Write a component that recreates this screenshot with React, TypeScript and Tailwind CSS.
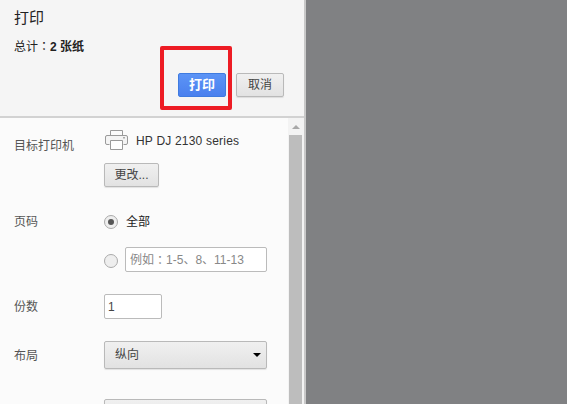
const font = "font-['Liberation_Sans','Noto_Sans_CJK_SC',sans-serif]"
const colon = "font-['Noto_Sans_CJK_TC',sans-serif]"

function PrinterIcon() {
  return (
    <svg width="23" height="20" viewBox="0 0 23 20" fill="none" stroke="#9a9a9a" strokeWidth="1" className="mb-[3px] ml-[1px]">
      <path d="M5.5 5.5V0.5H17.5V5.5" />
      <path d="M4.5 14.5H2A1.5 1.5 0 0 1 0.5 13V7A1.5 1.5 0 0 1 2 5.5H21A1.5 1.5 0 0 1 22.5 7V13A1.5 1.5 0 0 1 21 14.5H18.5" fill="#f4f4f4" />
      <path d="M5.5 10.5H17.5V19.5H5.5Z" fill="#fff" />
      <rect x="18" y="7" width="2" height="1.5" fill="#aaa" stroke="none" />
    </svg>
  )
}

function Row({
  label,
  className,
  labelClass,
  children,
}: {
  label: string
  className: string
  labelClass?: string
  children?: React.ReactNode
}) {
  return (
    <div className={`flex ${className}`}>
      <div className={`w-[90px] shrink-0 text-[12px] leading-[18px] text-[#555] ${labelClass ?? ""}`}>{label}</div>
      <div className="flex-1">{children}</div>
    </div>
  )
}

const buttonCls =
  "rounded-[2px] border border-[#b9b9b9] bg-gradient-to-b from-[#f0f0f0] to-[#e2e2e2] text-[12px] text-[#444] shadow-[0_1px_1px_rgba(0,0,0,0.1)]"

export default function App() {
  return (
    <div className={`relative flex h-[404px] w-[567px] overflow-hidden bg-[#808183] ${font}`}>
      <div className="flex h-full w-[304px] shrink-0 flex-col overflow-hidden bg-[#fbfbfb]">
        <div className="h-[118px] shrink-0 border-b-2 border-[#d2d2d2] bg-[#f5f5f5] pl-[14px] pr-[20px] pt-[9px]">
          <h1 className="text-[15px] leading-[18px] font-normal text-[#222]">打印</h1>
          <p className="mt-[10px] text-[12px] leading-[18px] text-[#222]">
            总计<span className={colon}>：</span>
            <b>2 张纸</b>
          </p>
          <div className="mt-[17px] flex justify-end gap-[10px]">
            <button className="h-[24px] w-[48px] rounded-[2px] border border-[#3f7be0] bg-gradient-to-b from-[#5c94f6] to-[#4a80ee] text-[13px] font-bold text-white">
              打印
            </button>
            <button className={`h-[24px] w-[48px] ${buttonCls}`}>取消</button>
          </div>
        </div>

        <div className="flex min-h-0 flex-1">
          <div className="flex-1 overflow-hidden pl-[14px] pt-[11px]">
            <Row label="目标打印机" className="" labelClass="pt-[8px]">
              <div className="flex h-[24px] items-center gap-[8px]">
                <PrinterIcon />
                <span className="text-[12px] tracking-[0.2px] text-[#333]">HP DJ 2130 series</span>
              </div>
              <button className={`mt-[10px] h-[24px] w-[55px] ${buttonCls}`}>更改...</button>
            </Row>
            <Row label="页码" className="mt-[26px]">
              <div className="flex h-[18px] items-center gap-[8px]">
                <span className="flex h-[14px] w-[14px] items-center justify-center rounded-full border border-[#aaa] bg-[#eee]">
                  <span className="h-[6px] w-[6px] rounded-full bg-[#555]" />
                </span>
                <span className="text-[12px] text-[#222]">全部</span>
              </div>
              <div className="mt-[16px] flex items-center gap-[7px]">
                <span className="mt-[3px] h-[14px] w-[14px] rounded-full border border-[#aaa] bg-[#eee]" />
                <div className="flex h-[25px] w-[142px] items-center rounded-[2px] border border-[#bbb] bg-white pl-[4px] text-[12px] text-[#888]">
                  例如<span className={colon}>：</span>1-5、8、11-13
                </div>
              </div>
            </Row>
            <Row label="份数" className="mt-[22px]" labelClass="pt-[4px]">
              <div className="flex h-[25px] w-[58px] items-center rounded-[2px] border border-[#bbb] bg-white pl-[3px] text-[12px] text-[#444]">
                1
              </div>
            </Row>
            <Row label="布局" className="mt-[22px]" labelClass="pt-[6px]">
              <div className={`flex h-[28px] w-[163px] items-center justify-between pl-[10px] pr-[5px] ${buttonCls}`}>
                <span>纵向</span>
                <span className="h-0 w-0 border-x-[4px] border-t-[4px] border-x-transparent border-t-black" />
              </div>
            </Row>
            <Row label="" className="mt-[30px]">
              <div className={`h-[28px] w-[163px] ${buttonCls}`} />
            </Row>
          </div>
          <div className="flex w-[16px] shrink-0 flex-col bg-[#f3f3f3] pl-[1px] pr-[2px]">
            <div className="flex h-[17px] items-center justify-center">
              <span className="h-0 w-0 border-x-[4px] border-b-[4px] border-x-transparent border-b-[#a8a8a8]" />
            </div>
            <div className="flex-1 bg-[#bdbdbd]" />
          </div>
        </div>
      </div>
      <div className="h-full w-[2px] shrink-0 bg-[#c8c8c8]" />

      <div className="absolute left-[160px] top-[46px] h-[64px] w-[72px] rounded-[2px] border-[4px] border-[#ed1c24]" />
    </div>
  )
}
